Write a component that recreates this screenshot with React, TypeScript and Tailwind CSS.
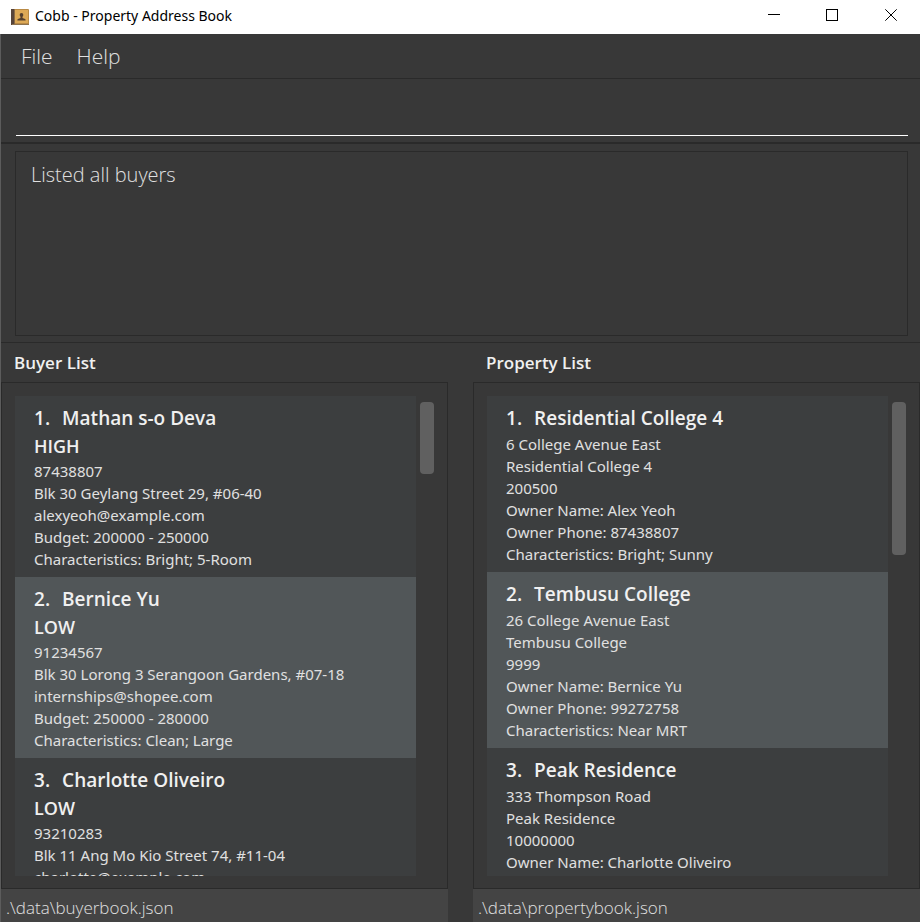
type Entry = { name: string; priority?: string; lines: string[] };

const buyers: Entry[] = [
  {
    name: "Mathan s-o Deva",
    priority: "HIGH",
    lines: ["87438807", "Blk 30 Geylang Street 29, #06-40", "alexyeoh@example.com", "Budget: 200000 - 250000", "Characteristics: Bright; 5-Room"],
  },
  {
    name: "Bernice Yu",
    priority: "LOW",
    lines: ["91234567", "Blk 30 Lorong 3 Serangoon Gardens, #07-18", "internships@shopee.com", "Budget: 250000 - 280000", "Characteristics: Clean; Large"],
  },
  {
    name: "Charlotte Oliveiro",
    priority: "LOW",
    lines: ["93210283", "Blk 11 Ang Mo Kio Street 74, #11-04", "charlotte@example.com"],
  },
];

const properties: Entry[] = [
  {
    name: "Residential College 4",
    lines: ["6 College Avenue East", "Residential College 4", "200500", "Owner Name: Alex Yeoh", "Owner Phone: 87438807", "Characteristics: Bright; Sunny"],
  },
  {
    name: "Tembusu College",
    lines: ["26 College Avenue East", "Tembusu College", "9999", "Owner Name: Bernice Yu", "Owner Phone: 99272758", "Characteristics: Near MRT"],
  },
  {
    name: "Peak Residence",
    lines: ["333 Thompson Road", "Peak Residence", "10000000", "Owner Name: Charlotte Oliveiro"],
  },
];

function BookIcon() {
  return (
    <svg width="18" height="17" viewBox="0 0 18 17" aria-hidden="true">
      <rect x="0" y="0" width="18" height="16" rx="1" fill="#b98a45" />
      <rect x="0" y="0" width="3" height="16" fill="#57443a" />
      <rect x="3" y="0" width="1" height="16" fill="#8a6a45" />
      <rect x="4" y="1" width="13" height="13" fill="#dda956" />
      <rect x="1" y="15" width="17" height="1" fill="#8d7350" />
      <path d="M10.500 4c1.200 0 1.800.8 1.800 1.900 0 .8-.4 1.500-.8 1.900v1.100l2.600 1c.4.2.5.6.5 1.600H6.400c0-1 .1-1.400.5-1.600l2.600-1V7.800c-.4-.4-.8-1.100-.8-1.900 0-1.100.6-1.900 1.800-1.900z" fill="#54402f" />
    </svg>
  );
}

function TitleBar() {
  return (
    <header className="flex h-[34px] shrink-0 items-center bg-white pl-[11px] text-black">
      <BookIcon />
      <h1 className="ml-1.5 flex-1 pb-0.5 font-['Noto_Sans',sans-serif] text-[14px] leading-5">Cobb - Property Address Book</h1>
      <button aria-label="Minimize" className="flex h-full w-[58px] items-center justify-center pb-1">
        <svg width="12" height="12" shapeRendering="crispEdges"><path d="M0 5.500h12" stroke="#000" /></svg>
      </button>
      <button aria-label="Maximize" className="flex h-full w-[58px] items-center justify-center pb-1">
        <svg width="12" height="12" shapeRendering="crispEdges"><path d="M.5.5h11v11H.5z" stroke="#000" fill="none" /></svg>
      </button>
      <button aria-label="Close" className="flex h-full w-[59px] items-center justify-center pb-1">
        <svg width="12" height="12"><path d="M.3.3l11.400 11.400M11.700.3L.3 11.700" stroke="#000" fill="none" /></svg>
      </button>
    </header>
  );
}

function Card({ entry, index }: { entry: Entry; index: number }) {
  return (
    <li className="px-[19px] py-[7px] font-['Noto_Sans',sans-serif] text-[15px] leading-[22px] odd:bg-[#3c3e3f] even:bg-[#515658]">
      <h3 className="flex gap-3 font-['Open_Sans','Noto_Sans',sans-serif] text-[19px] leading-[30px] font-semibold text-[#f0f0f0]">
        <span>{index}.</span>
        <span>{entry.name}</span>
      </h3>
      {entry.priority && (
        <p className="font-['Open_Sans','Noto_Sans',sans-serif] text-[18px] leading-[27px] font-semibold text-[#f0f0f0]">{entry.priority}</p>
      )}
      {entry.lines.map((line) => (
        <p key={line}>{line}</p>
      ))}
    </li>
  );
}

function Panel({ title, entries, file, thumb }: { title: string; entries: Entry[]; file: string; thumb: string }) {
  return (
    <section className="flex min-h-0 min-w-0 flex-1 flex-col">
      <h2 className="h-[39px] shrink-0 px-[13px] text-[17px] leading-[39px] font-semibold text-[#f0f0f0]">{title}</h2>
      <div className="flex min-h-0 flex-1 border border-[#2a2a2a] pt-[13px] pr-[13px] pb-3 pl-[13px]">
        <ul className="min-w-0 flex-1 overflow-hidden bg-[#3c3e3f]">
          {entries.map((entry, i) => (
            <Card key={entry.name} entry={entry} index={i + 1} />
          ))}
        </ul>
        <div className="ml-1 w-[14px] shrink-0 pt-1.5">
          <div className={"rounded-[4px] bg-[#606060] " + thumb} />
        </div>
      </div>
      <footer className="h-[33px] shrink-0 bg-[#444444] px-[5px] pt-1 text-[17px] leading-[30px] font-light">{file}</footer>
    </section>
  );
}

export default function App() {
  return (
    <div className="flex h-screen flex-col overflow-hidden bg-[#383838] font-['Open_Sans','Noto_Sans',sans-serif] text-[#e0e0e0]">
      <TitleBar />
      <div className="flex min-h-0 flex-1 flex-col border-l border-[#5c5c5c]">
        <nav className="flex h-11 shrink-0 items-center gap-6 px-5 text-[21px] leading-7 font-light">
          <button>File</button>
          <button>Help</button>
        </nav>
        <div className="h-[66px] shrink-0 border-t border-b-2 border-[#2a2a2a] pr-3 pl-[15px]">
          <input aria-label="Command" className="block h-[57px] w-full border-b border-white bg-transparent pt-4 text-[20px] font-light outline-none" />
        </div>
        <div className="h-[199px] shrink-0 border-b border-[#2a2a2a] pt-[7px] pr-3 pb-1.5 pl-3.5">
          <textarea
            readOnly
            aria-label="Result"
            defaultValue="Listed all buyers"
            className="block h-full w-full resize-none border border-[#2a2a2a] bg-transparent px-[15px] py-2 text-[20px] leading-[30px] font-light outline-none"
          />
        </div>
        <main className="flex min-h-0 flex-1 gap-[25px]">
          <Panel title="Buyer List" entries={buyers} file=".\data\buyerbook.json" thumb="h-[72px]" />
          <Panel title="Property List" entries={properties} file=".\data\propertybook.json" thumb="h-[153px]" />
        </main>
      </div>
    </div>
  );
}
